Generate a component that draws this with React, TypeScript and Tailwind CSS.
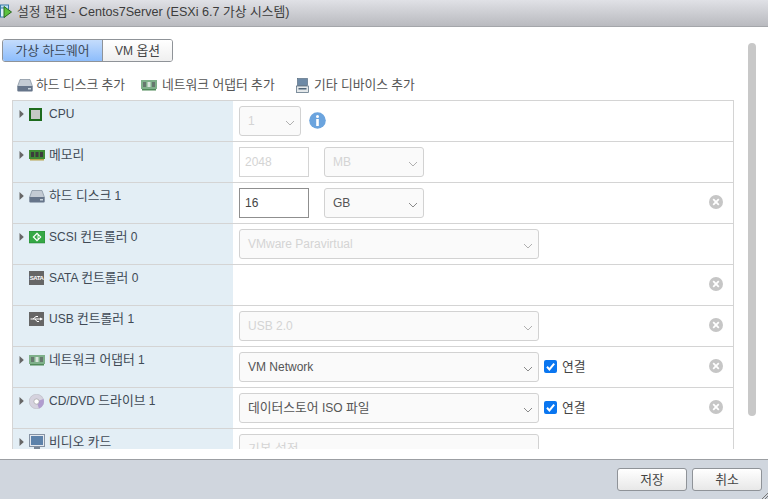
import React from "react";

const K = ({ t }: { t: string }) => (
  <span>
    {t.split(/([\uAC00-\uD7A3]+)/).map((p, i) =>
      /[\uAC00-\uD7A3]/.test(p) ? <span key={i} className="text-[12.8px]">{p}</span> : <span key={i}>{p}</span>
    )}
  </span>
);

const Chevron = ({ c = "#9a9a9a" }: { c?: string }) => (
  <svg width="10" height="6" viewBox="0 0 10 6" className="absolute right-[5px] top-[13px]">
    <path d="M1 1 L5 5 L9 1" fill="none" stroke={c} strokeWidth="1" />
  </svg>
);

const Tri = () => (
  <svg width="5" height="8" viewBox="0 0 5 8" className="shrink-0">
    <path d="M0.5 0 L4.8 4 L0.5 8 Z" fill="#666" />
  </svg>
);

const Sel = ({ w, text, on }: { w: string; text: string; on?: boolean }) => (
  <div className={`relative h-[30px] shrink-0 rounded-[3px] border border-[#d2d2d2] bg-[#fafafa] pl-[8px] leading-[28px] ${w} ${on ? "text-[#555]" : "text-[#d4d4d4]"}`}>
    <K t={text} />
    <Chevron c={on ? "#8a8a8a" : "#b0b0b0"} />
  </div>
);

const Close = () => (
  <svg width="14" height="14" viewBox="0 0 14 14" className="shrink-0">
    <circle cx="7" cy="7" r="7" fill="#c6c6c6" />
    <path d="M4.2 4.2 L9.8 9.8 M9.8 4.2 L4.2 9.8" stroke="#fff" strokeWidth="1.8" />
  </svg>
);

const Check = () => (
  <div className="flex items-center gap-[5px] text-[#444]">
    <svg width="13" height="13" viewBox="0 0 13 13" className="shrink-0">
      <rect width="13" height="13" rx="2" fill="#0a76f0" />
      <path d="M3 6.8 L5.4 9.4 L10.2 3.6" fill="none" stroke="#fff" strokeWidth="2" />
    </svg>
    <K t="연결" />
  </div>
);

const HddIcon = () => (
  <svg width="16" height="13" viewBox="0 0 16 13">
    <path d="M3 0.5 H13 L15.5 7.5 H0.5 Z" fill="#c3cbd4" stroke="#7f8c9b" strokeWidth="0.7" />
    <rect x="0.3" y="7" width="15.4" height="5.5" rx="1" fill="#66758a" />
    <rect x="11" y="9" width="3" height="1.5" fill="#c9d5dd" />
  </svg>
);
const RamIcon = ({ dim }: { dim?: boolean }) => (
  <svg width="16" height="12" viewBox="0 0 16 12">
    <rect y="1" width="16" height="9" fill={dim ? "#7fb08a" : "#3f8a35"} />
    <rect x="2" y="3" width="3" height="5" fill={dim ? "#66786e" : "#3c3c3c"} />
    <rect x="6.5" y="3" width="3" height="5" fill={dim ? "#d8e4dc" : "#3c3c3c"} />
    <rect x="11" y="3" width="3" height="5" fill={dim ? "#66786e" : "#3c3c3c"} />
    <rect x="1" y="10" width="14" height="1.5" fill={dim ? "#4f8a58" : "#b5a24f"} />
  </svg>
);
const CpuIcon = () => (
  <svg width="13" height="13" viewBox="0 0 13 13">
    <rect width="13" height="13" fill="#1d6b1d" />
    <rect x="2" y="2" width="9" height="9" fill="#c6c9c6" />
  </svg>
);
const ScsiIcon = () => (
  <svg width="16" height="13" viewBox="0 0 16 13">
    <rect width="16" height="12" fill="#35a845" stroke="#1f7a2c" strokeWidth="0.5" />
    <path d="M8 1.5 L12.5 6 L8 10.5 L3.5 6 Z" fill="#fff" />
    <path d="M8.5 3.8 L6.2 6 L8.5 8.2 M6.5 6 H11" fill="none" stroke="#35a845" strokeWidth="1.2" />
  </svg>
);
const SataIcon = () => (
  <div className="flex h-[14px] w-[15px] items-center justify-center bg-[#666] text-[6px] font-bold leading-none tracking-[-0.5px] text-white">SATA</div>
);
const UsbIcon = () => (
  <svg width="15" height="14" viewBox="0 0 15 14">
    <rect width="15" height="14" fill="#666" />
    <path d="M1.5 7 H12.5 M4 7 L7 4.5 H9 M6 7 L8 9.5 H10" fill="none" stroke="#fff" strokeWidth="1" />
    <path d="M11 5.5 L14 7 L11 8.5 Z" fill="#fff" />
  </svg>
);
const CdIcon = () => (
  <svg width="15" height="15" viewBox="0 0 15 15">
    <circle cx="7.5" cy="7.5" r="7.3" fill="#d5d2de" stroke="#a8a8b0" strokeWidth="0.4" />
    <path d="M7.5 7.5 L14.5 5 A7.5 7.5 0 0 1 10 14.5 Z" fill="#b09ccf" />
    <circle cx="7.5" cy="7.5" r="2.6" fill="#fff" stroke="#999" strokeWidth="0.6" />
  </svg>
);
const MonIcon = () => (
  <svg width="16" height="16" viewBox="0 0 16 16">
    <rect x="0.5" y="0.5" width="15" height="12" fill="#e4e8ee" stroke="#8592a3" />
    <rect x="2" y="2" width="12" height="9" fill="#5d82aa" />
    <rect x="5" y="13" width="6" height="2" fill="#7a8796" />
  </svg>
);
const DevIcon = () => (
  <svg width="13" height="15" viewBox="0 0 13 15">
    <rect x="1.5" y="0.5" width="10" height="7" fill="#6e8aa6" stroke="#4e6478" strokeWidth="0.6" />
    <rect x="0.5" y="8" width="12" height="6.5" fill="#e4e8ea" stroke="#4e6478" strokeWidth="0.7" />
    <rect x="2.5" y="10" width="8" height="1.5" fill="#4e6478" />
  </svg>
);
const TitleIcon = () => (
  <svg width="12" height="16" viewBox="0 0 12 16" className="shrink-0">
    <rect x="0.5" y="1" width="8" height="8" fill="#bfe0f5" stroke="#3a7ca8" />
    <rect x="0.5" y="4" width="4" height="9" fill="#dff0fb" stroke="#3a7ca8" />
    <path d="M4 2.5 L11.5 8 L4 13.5 Z" fill="#5cc23f" stroke="#2a6a1e" />
  </svg>
);
const InfoIcon = () => (
  <svg width="17" height="17" viewBox="0 0 17 17">
    <circle cx="8.5" cy="8.5" r="8.3" fill="#6ba4de" />
    <circle cx="8.5" cy="4.5" r="1.5" fill="#fff" />
    <rect x="7.2" y="7" width="2.6" height="7" fill="#fff" />
  </svg>
);

const Row = ({ arrow, icon, label, x, children }: { arrow?: boolean; icon: React.ReactNode; label: string; x?: boolean; children?: React.ReactNode }) => (
  <div className="flex h-[41px] shrink-0 border-b border-[#d4d4d4]">
    <div className="flex w-[220px] shrink-0 items-start bg-[#e3eef5] pl-[6px] pt-[5px] text-[#404a55]">
      <div className="flex h-[16px] w-[10px] shrink-0 items-center">{arrow && <Tri />}</div>
      <div className="flex h-[16px] w-[20px] shrink-0 items-center">{icon}</div>
      <span className="leading-[16px]"><K t={label} /></span>
    </div>
    <div className="flex min-w-0 flex-1 items-start gap-[15px] pl-[6px] pr-[10px] pt-[5px]">
      {children}
      {x && <div className="ml-auto mt-[7px]"><Close /></div>}
    </div>
  </div>
);

export default function App() {
  return (
    <div className="relative flex h-[499px] w-[768px] flex-col overflow-hidden bg-white text-[12px] text-[#444]" style={{ fontFamily: '"Liberation Sans","Noto Sans CJK KR",sans-serif' }}>
      <div className="flex h-[27px] shrink-0 items-center gap-[5px] border-b border-[#a4a6aa] bg-gradient-to-b from-[#e0e1e6] to-[#b9babf] pb-[3px] text-[12.6px] text-[#3c3c3c]">
        <TitleIcon />
        <K t="설정 편집 - Centos7Server (ESXi 6.7 가상 시스템)" />
      </div>

      <div className="flex min-h-0 flex-1">
        <div className="flex min-w-0 flex-1 flex-col pl-[2px]">
          <div className="mt-[12px] flex h-[23px] w-[171px] shrink-0 overflow-hidden rounded-[3px] border border-[#8f9398]">
            <div className="flex w-[100px] items-center justify-center border-r border-[#8f9398] bg-gradient-to-b from-[#c4dcfc] to-[#8dbdfb] text-[#3c4a5a]"><K t="가상 하드웨어" /></div>
            <div className="flex flex-1 items-center justify-center bg-gradient-to-b from-white to-[#efefef] text-[#444]"><K t="VM 옵션" /></div>
          </div>
          <div className="flex h-[33px] shrink-0 items-center pl-[15px] pt-[13px] text-[#555]">
            <div className="flex w-[124px] items-center gap-[3px]"><HddIcon /><K t="하드 디스크 추가" /></div>
            <div className="flex w-[155px] items-center gap-[5px]"><RamIcon dim /><K t="네트워크 어댑터 추가" /></div>
            <div className="flex items-center gap-[5px]"><DevIcon /><K t="기타 디바이스 추가" /></div>
          </div>
          <div className="mb-[10px] ml-[10px] mt-[5px] flex min-h-0 w-[722px] flex-1 flex-col overflow-hidden border-x border-t border-[#d4d4d4]">
            <Row arrow icon={<CpuIcon />} label="CPU">
              <Sel w="w-[62px]" text="1" />
              <div className="-ml-[7px] mt-[6px]"><InfoIcon /></div>
            </Row>
            <Row arrow icon={<RamIcon />} label="메모리">
              <div className="h-[30px] w-[70px] shrink-0 border border-[#d4d4d4] pl-[5px] leading-[28px] text-[#d4d4d4]">2048</div>
              <Sel w="w-[100px]" text="MB" />
            </Row>
            <Row arrow icon={<HddIcon />} label="하드 디스크 1" x>
              <div className="h-[30px] w-[70px] shrink-0 border border-[#8f8f8f] pl-[5px] leading-[28px] text-[#444]">16</div>
              <Sel w="w-[100px]" text="GB" on />
            </Row>
            <Row arrow icon={<ScsiIcon />} label="SCSI 컨트롤러 0">
              <Sel w="w-[300px]" text="VMware Paravirtual" />
            </Row>
            <Row icon={<SataIcon />} label="SATA 컨트롤러 0" x />
            <Row icon={<UsbIcon />} label="USB 컨트롤러 1" x>
              <Sel w="w-[300px]" text="USB 2.0" />
            </Row>
            <Row arrow icon={<RamIcon dim />} label="네트워크 어댑터 1" x>
              <Sel w="w-[300px]" text="VM Network" on />
              <div className="-ml-[10px] mt-[5px]"><Check /></div>
            </Row>
            <Row arrow icon={<CdIcon />} label="CD/DVD 드라이브 1" x>
              <Sel w="w-[300px]" text="데이터스토어 ISO 파일" on />
              <div className="-ml-[10px] mt-[5px]"><Check /></div>
            </Row>
            <Row arrow icon={<MonIcon />} label="비디오 카드">
              <Sel w="w-[300px]" text="기본 설정" />
            </Row>
          </div>
        </div>
        <div className="flex w-[33px] shrink-0 flex-col pl-[13px] pt-[16px]">
          <div className="h-[373px] w-[8px] rounded-full bg-[#c8c8c8]" />
        </div>
      </div>

      <div className="flex h-[40px] shrink-0 items-start justify-end gap-[5px] border-t border-[#9c9fa3] bg-[#d0d6de] pr-[6px] pt-[8px]">
        <div className="flex h-[23px] w-[70px] items-center justify-center rounded-[3px] border border-[#8f9398] bg-gradient-to-b from-white to-[#e8e8e8] text-[#444]"><K t="저장" /></div>
        <div className="flex h-[23px] w-[70px] items-center justify-center rounded-[3px] border border-[#8f9398] bg-gradient-to-b from-white to-[#e8e8e8] text-[#444]"><K t="취소" /></div>
      </div>
      <svg width="6" height="6" viewBox="0 0 6 6" className="absolute bottom-0 right-0">
        <path d="M0 6 L6 0 M3 6 L6 3" stroke="#777" strokeWidth="1" />
      </svg>
    </div>
  );
}
